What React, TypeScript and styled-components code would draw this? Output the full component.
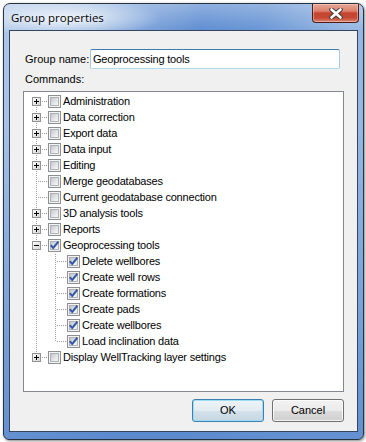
import React from "react";
import styled, { createGlobalStyle } from "styled-components";

const Global = createGlobalStyle`
  html, body { margin: 0; padding: 0; background: #ffffff; }
  body {
    width: 366px;
    height: 442px;
    overflow: hidden;
    font-family: "Liberation Sans", Arial, sans-serif;
  }
`;

const Window = styled.div`
  box-sizing: border-box;
  margin: 3px 0 0 3px;
  width: 361px;
  height: 437px;
  border: 1px solid #28313f;
  border-radius: 7px 7px 6px 6px;
  padding: 0 5px 7px 5px;
  display: flex;
  flex-direction: column;
  background:
    radial-gradient(ellipse 95px 20px at 62px 14px, rgba(255, 255, 255, 0.8), rgba(255, 255, 255, 0) 100%),
    linear-gradient(to bottom, rgba(255, 255, 255, 0.3) 0px, rgba(255, 255, 255, 0) 28px),
    linear-gradient(to bottom, rgba(90, 137, 205, 0) 0px, rgba(90, 137, 205, 0) 120px, rgba(90, 137, 205, 0.85) 100%),
    linear-gradient(100deg, #aec7e8 0%, #93b3df 22%, #5d8cd1 46%, #6694d4 60%, #95b6e2 80%, #9ab9e4 100%);
  box-shadow: 1px 1px 3px rgba(0, 0, 0, 0.5);
`;

const TitleBar = styled.div`
  height: 26px;
  flex: none;
  display: flex;
  align-items: flex-start;
  justify-content: space-between;
`;

const TitleText = styled.div`
  padding: 1px 0 0 2px;
  line-height: 26px;
  font-family: "Open Sans", "Noto Sans", sans-serif;
  font-size: 11.5px;
  color: #000;
  text-shadow: 0 0 6px rgba(255, 255, 255, 0.9);
`;

const CloseButton = styled.div`
  box-sizing: border-box;
  width: 47px;
  height: 19px;
  margin-right: -1px;
  border: 1px solid #4e1c16;
  border-top: none;
  border-radius: 0 0 4px 4px;
  display: flex;
  align-items: center;
  justify-content: center;
  background: linear-gradient(#e9a998 0%, #d9806c 40%, #c6432d 50%, #c54a35 78%, #dc8a77 100%);
  box-shadow: inset 0 0 0 1px rgba(255, 220, 210, 0.45);
`;

const ClientFrame = styled.div`
  flex: 1;
  border: 1px solid #33455f;
  background: #f0f0f0;
  padding: 18px 13px 9px 13px;
  display: flex;
  flex-direction: column;
`;

const NameRow = styled.div`
  display: flex;
  align-items: center;
  height: 20px;
  padding-right: 4px;
`;

const Label = styled.div<{ $width?: number }>`
  flex: none;
  width: ${(p) => (p.$width ? `${p.$width}px` : "auto")};
  padding-left: 2px;
  box-sizing: border-box;
  font-size: 11px;
  line-height: 15px;
  color: #000;
`;

const CommandsLabel = styled(Label)`
  margin-top: 3px;
`;

const TextInput = styled.input`
  flex: 1;
  min-width: 0;
  height: 20px;
  box-sizing: border-box;
  margin: 0;
  border: 1px solid;
  border-color: #3d7bad #a4c9e3 #b7d9ed #a4c9e3;
  border-radius: 2px;
  padding: 0 2px;
  font-family: "Liberation Sans", Arial, sans-serif;
  font-size: 11px;
  letter-spacing: -0.2px;
  color: #000;
  background: #fff;
  outline: none;
`;

const Tree = styled.div`
  margin-top: 4px;
  height: 301px;
  box-sizing: border-box;
  border: 1px solid #828790;
  background: #fff;
  padding-top: 1px;
  display: flex;
  flex-direction: column;
`;

const Row = styled.div`
  height: 16px;
  display: flex;
  align-items: center;
`;

const Guides = styled.svg`
  flex: none;
  display: block;
  height: 16px;
`;

const CheckBox = styled.span`
  position: relative;
  box-sizing: border-box;
  flex: none;
  width: 13px;
  height: 13px;
  border: 1px solid #8e8f8f;
  background: #f4f4f4;
  padding: 1px;
  &::before {
    content: "";
    display: block;
    width: 9px;
    height: 9px;
    box-sizing: border-box;
    border: 1px solid #aeb2b8;
    background: linear-gradient(135deg, #c3c7cc 0%, #e2e4e6 55%, #f6f6f6 100%);
  }
`;

const CheckMark = styled.svg`
  position: absolute;
  left: 0;
  top: 0;
`;

const ItemText = styled.span`
  margin-left: 2px;
  font-size: 11px;
  letter-spacing: -0.2px;
  line-height: 16px;
  color: #000;
  white-space: nowrap;
`;

const ButtonRow = styled.div`
  margin-top: 7px;
  display: flex;
  justify-content: flex-end;
  gap: 8px;
`;

const Button = styled.button<{ $default?: boolean }>`
  width: 72px;
  height: 23px;
  box-sizing: border-box;
  margin: 0;
  padding: 0 0 1px 0;
  font-family: "Liberation Sans", Arial, sans-serif;
  font-size: 11px;
  color: #000;
  border: 1px solid ${(p) => (p.$default ? "#3c7fb1" : "#707070")};
  border-radius: 3px;
  background: ${(p) =>
    p.$default
      ? "linear-gradient(#eef4f8 0%, #e3ecf2 50%, #d3e1ea 51%, #c6d8e4 100%)"
      : "linear-gradient(#f2f2f2 0%, #ebebeb 50%, #dddddd 51%, #cfcfcf 100%)"};
  box-shadow: ${(p) =>
    p.$default ? "inset 0 0 0 1px #9fdcf6" : "inset 0 0 0 1px rgba(255,255,255,0.75)"};
`;

type Item = {
  label: string;
  level: 1 | 2;
  expander?: "plus" | "minus";
  checked?: boolean;
};

const items: Item[] = [
  { label: "Administration", level: 1, expander: "plus" },
  { label: "Data correction", level: 1, expander: "plus" },
  { label: "Export data", level: 1, expander: "plus" },
  { label: "Data input", level: 1, expander: "plus" },
  { label: "Editing", level: 1, expander: "plus" },
  { label: "Merge geodatabases", level: 1 },
  { label: "Current geodatabase connection", level: 1 },
  { label: "3D analysis tools", level: 1, expander: "plus" },
  { label: "Reports", level: 1, expander: "plus" },
  { label: "Geoprocessing tools", level: 1, expander: "minus", checked: true },
  { label: "Delete wellbores", level: 2, checked: true },
  { label: "Create well rows", level: 2, checked: true },
  { label: "Create formations", level: 2, checked: true },
  { label: "Create pads", level: 2, checked: true },
  { label: "Create wellbores", level: 2, checked: true },
  { label: "Load inclination data", level: 2, checked: true },
  { label: "Display WellTracking layer settings", level: 1, expander: "plus" },
];

const LINE = "#a0a0a0";

function Dotted({ x1, y1, x2, y2 }: { x1: number; y1: number; x2: number; y2: number }) {
  return (
    <line
      x1={x1}
      y1={y1}
      x2={x2}
      y2={y2}
      stroke={LINE}
      strokeWidth={1}
      strokeDasharray="1 1"
      shapeRendering="crispEdges"
    />
  );
}

function Expander({ kind }: { kind: "plus" | "minus" }) {
  return (
    <g shapeRendering="crispEdges">
      <defs>
        <linearGradient id="expg" x1="0" y1="0" x2="1" y2="1">
          <stop offset="0" stopColor="#ffffff" />
          <stop offset="1" stopColor="#d2d2d2" />
        </linearGradient>
      </defs>
      <rect x={8.5} y={4.5} width={8} height={8} fill="url(#expg)" stroke="#919191" />
      <line x1={10} y1={8.5} x2={15} y2={8.5} stroke="#000" />
      {kind === "plus" && <line x1={12.5} y1={6} x2={12.5} y2={11} stroke="#000" />}
    </g>
  );
}

function TreeGuides({ item, index }: { item: Item; index: number }) {
  const isFirst = index === 0;
  const isLastRoot = index === items.length - 1;
  if (item.level === 1) {
    return (
      <Guides width={24} viewBox="0 0 24 16">
        {!isFirst && <Dotted x1={12.5} y1={0} x2={12.5} y2={8} />}
        {!isLastRoot && <Dotted x1={12.5} y1={8} x2={12.5} y2={16} />}
        <Dotted x1={item.expander ? 18 : 14} y1={8.5} x2={24} y2={8.5} />
        {item.expander && <Expander kind={item.expander} />}
      </Guides>
    );
  }
  const next = items[index + 1];
  const lastChild = !next || next.level !== 2;
  return (
    <Guides width={43} viewBox="0 0 43 16">
      <Dotted x1={12.5} y1={0} x2={12.5} y2={16} />
      <Dotted x1={31.5} y1={1} x2={31.5} y2={lastChild ? 9 : 16} />
      <Dotted x1={33} y1={8.5} x2={43} y2={8.5} />
    </Guides>
  );
}

function Check({ checked }: { checked?: boolean }) {
  return (
    <CheckBox>
      {checked && (
        <CheckMark width={11} height={11} viewBox="0 0 11 11">
          <polyline
            points="1.8,5.2 4.2,8 9.4,1.6"
            fill="none"
            stroke="#3556a8"
            strokeWidth={2}
            strokeLinejoin="miter"
          />
        </CheckMark>
      )}
    </CheckBox>
  );
}

function CloseGlyph() {
  return (
    <svg width={14} height={11} viewBox="0 0 14 11">
      <path d="M2.5 1.5 L11.5 9.5 M11.5 1.5 L2.5 9.5" stroke="#3b3b3b" strokeWidth={4.4} strokeLinecap="round" />
      <path d="M2.5 1.5 L11.5 9.5 M11.5 1.5 L2.5 9.5" stroke="#ffffff" strokeWidth={2.6} strokeLinecap="round" />
    </svg>
  );
}

export default function App() {
  return (
    <>
      <Global />
      <Window>
        <TitleBar>
          <TitleText>Group properties</TitleText>
          <CloseButton>
            <CloseGlyph />
          </CloseButton>
        </TitleBar>
        <ClientFrame>
          <NameRow>
            <Label $width={67}>Group name:</Label>
            <TextInput readOnly value="Geoprocessing tools" />
          </NameRow>
          <CommandsLabel>Commands:</CommandsLabel>
          <Tree>
            {items.map((item, i) => (
              <Row key={item.label}>
                <TreeGuides item={item} index={i} />
                <Check checked={item.checked} />
                <ItemText>{item.label}</ItemText>
              </Row>
            ))}
          </Tree>
          <ButtonRow>
            <Button $default>OK</Button>
            <Button>Cancel</Button>
          </ButtonRow>
        </ClientFrame>
      </Window>
    </>
  );
}
